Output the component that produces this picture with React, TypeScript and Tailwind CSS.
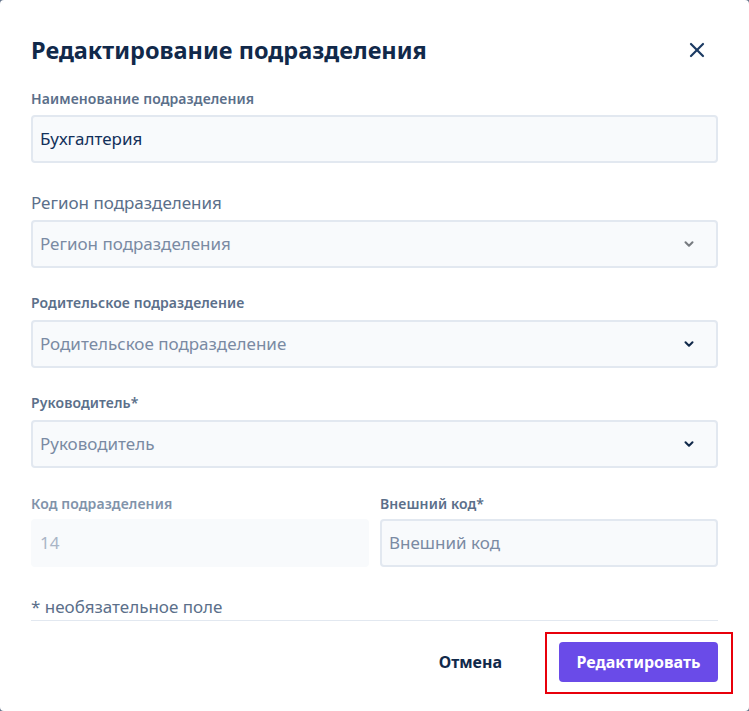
import { ChevronDown, X } from 'lucide-react';

const font = { fontFamily: '"Noto Sans", "Open Sans", sans-serif' };

function Select({ placeholder, chevron }: { placeholder: string; chevron: string }) {
  return (
    <div className="flex h-[48px] items-center justify-between rounded-[4px] border-2 border-[#e2e8f0] bg-[#f8fafc] pl-[7px] pr-[20px]">
      <span className="text-[17px] text-[#7a8aa3]">{placeholder}</span>
      <ChevronDown className={`h-[14px] w-[14px] ${chevron}`} strokeWidth={3.5} />
    </div>
  );
}

export default function App() {
  return (
    <div className="min-h-[711px] bg-[#64748b]" style={font}>
      <div className="h-[711px] rounded-[4px] bg-white px-[31px] pt-[32px]">
        <div className="flex items-center justify-between">
          <h1 className="text-[23.5px] font-bold leading-[36px] text-[#11294a]">
            Редактирование подразделения
          </h1>
          <X className="mr-[9px] h-[24px] w-[24px] text-[#1b3a62]" strokeWidth={2.2} />
        </div>

        <div className="mt-[22px] text-[14px] font-semibold leading-[18px] tracking-[0.1px] text-[#5b6f8a]">
          Наименование подразделения
        </div>
        <div className="mt-[7px] flex h-[48px] items-center rounded-[4px] border-2 border-[#e2e8f0] bg-[#f8fafc] pl-[7px]">
          <span className="text-[17px] text-[#12305a]">Бухгалтерия</span>
        </div>

        <div className="mt-[29px] text-[17px] leading-[22px] text-[#5b6f8a]">Регион подразделения</div>
        <div className="mt-[6px]">
          <Select placeholder="Регион подразделения" chevron="text-[#777b80]" />
        </div>

        <div className="mt-[26px] text-[14px] font-semibold leading-[18px] tracking-[0.1px] text-[#5b6f8a]">
          Родительское подразделение
        </div>
        <div className="mt-[8px]">
          <Select placeholder="Родительское подразделение" chevron="text-[#11294a]" />
        </div>

        <div className="mt-[26px] text-[14px] font-semibold leading-[18px] tracking-[0.1px] text-[#5b6f8a]">
          Руководитель*
        </div>
        <div className="mt-[8px]">
          <Select placeholder="Руководитель" chevron="text-[#11294a]" />
        </div>

        <div className="mt-[27px] grid grid-cols-2 gap-[11px]">
          <div>
            <div className="text-[14px] font-semibold leading-[18px] tracking-[0.1px] text-[#8193aa]">
              Код подразделения
            </div>
            <div className="mt-[6px] flex h-[48px] items-center rounded-[4px] bg-[#f8fafc] pl-[9px]">
              <span className="text-[17px] text-[#a9b5c6]">14</span>
            </div>
          </div>
          <div>
            <div className="text-[14px] font-semibold leading-[18px] tracking-[0.1px] text-[#5b6f8a]">
              Внешний код*
            </div>
            <div className="mt-[6px] flex h-[48px] items-center rounded-[4px] border-2 border-[#e2e8f0] bg-[#f8fafc] pl-[7px]">
              <span className="text-[17px] text-[#7a8aa3]">Внешний код</span>
            </div>
          </div>
        </div>

        <div className="mt-[29px] text-[17px] leading-[22px] text-[#5b6f8a]">* необязательное поле</div>
        <div className="mt-[2px] h-px bg-[#e2e8f0]" />

        <div className="mt-[21px] flex items-center justify-end">
          <button className="mr-[57px] text-[16px] font-bold text-[#11294a]">Отмена</button>
          <div className="relative">
            <button className="h-[40px] w-[159px] rounded-[4px] bg-[#6a4be8] text-[16px] font-bold text-white">
              Редактировать
            </button>
            <div className="pointer-events-none absolute -left-[14px] -top-[10px] h-[62px] w-[188px] border-2 border-[#e8000b]" />
          </div>
        </div>
      </div>
    </div>
  );
}
